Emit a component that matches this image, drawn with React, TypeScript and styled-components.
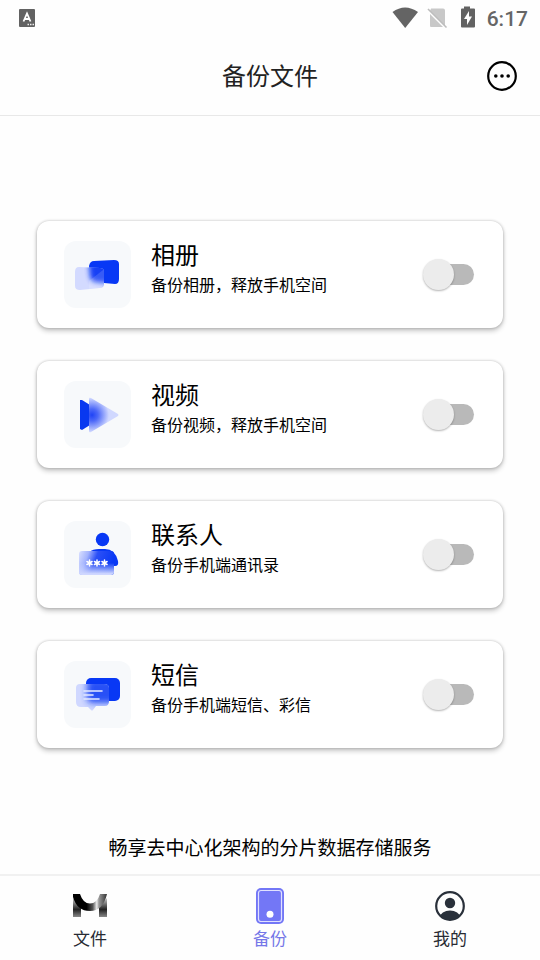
import React, { useState } from "react";
import styled, { createGlobalStyle } from "styled-components";

const GlobalStyle = createGlobalStyle`
  *, *::before, *::after { box-sizing: border-box; }
  body {
    margin: 0;
    background: #fefefe;
    color: #000;
    font-family: "Noto Sans CJK SC", "Noto Sans", sans-serif;
  }
`;

const Screen = styled.div`
  display: flex;
  flex-direction: column;
  min-height: 100vh;
`;

const StatusBar = styled.div`
  display: flex;
  align-items: center;
  justify-content: space-between;
  height: 36px;
  padding: 0 12px 0 19px;
`;

const StatusIcons = styled.div`
  display: flex;
  align-items: center;
`;

const Clock = styled.time`
  margin-left: 10px;
  padding-top: 2px;
  color: #666;
  font: 500 21px/24px Roboto, sans-serif;
`;

const Header = styled.header`
  display: grid;
  grid-template-columns: 1fr auto 1fr;
  align-items: center;
  height: 80px;
  padding: 0 22px;
  border-bottom: 1px solid #e8e8e8;
`;

const PageTitle = styled.h1`
  grid-column: 2;
  margin: 0;
  padding-bottom: 2px;
  color: #222;
  font-size: 24px;
  font-weight: 400;
  line-height: 36px;
`;

const MoreButton = styled.button`
  display: flex;
  justify-self: end;
  padding: 0;
  border: 0;
  background: none;
  cursor: pointer;
`;

const Main = styled.main`
  display: flex;
  flex: 1;
  flex-direction: column;
  padding: 105px 36px 12px;
`;

const CardList = styled.div`
  display: flex;
  flex-direction: column;
  gap: 33px;
`;

const Card = styled.label`
  display: flex;
  align-items: center;
  height: 107px;
  margin: 0 1px;
  padding: 0 29px 0 27px;
  border-radius: 12px;
  background: #fff;
  box-shadow: 0 3px 5px rgba(0, 0, 0, 0.22), 0 0 3px rgba(0, 0, 0, 0.24);
  cursor: pointer;
`;

const Tile = styled.svg`
  flex: none;
  width: 67px;
  height: 67px;
  border-radius: 12px;
  background: #f7f9fb;
`;

const CardText = styled.span`
  display: flex;
  flex: 1;
  flex-direction: column;
  margin-left: 20px;
  padding-bottom: 17px;
`;

const CardTitle = styled.span`
  font-size: 24px;
  line-height: 36px;
`;

const CardNote = styled.span`
  font-size: 16px;
  line-height: 24px;
`;

const Switch = styled.input`
  position: relative;
  display: flex;
  align-items: center;
  flex: none;
  width: 52px;
  height: 31px;
  margin: 0;
  appearance: none;
  border-radius: 16px;
  cursor: pointer;

  &::before {
    content: "";
    width: 48px;
    height: 21px;
    margin-left: 4px;
    border-radius: 11px;
    background: #b9b9b9;
  }

  &::after {
    content: "";
    position: absolute;
    left: 1px;
    width: 31px;
    height: 31px;
    border-radius: 50%;
    background: #ececec;
    box-shadow: 0 1px 2px rgba(0, 0, 0, 0.3);
  }

  &:checked::before { background: #b9bafc; }
  &:checked::after { left: 21px; background: #7577f8; }
`;

const Slogan = styled.p`
  margin: auto 0 0;
  font-size: 19px;
  line-height: 30px;
  text-align: center;
`;

const TabBar = styled.nav`
  display: grid;
  grid-template-columns: repeat(3, 1fr);
  height: 86px;
  border-top: 2px solid #f1f1f1;
`;

const Tab = styled.a<{ $active?: boolean }>`
  display: flex;
  flex-direction: column;
  align-items: center;
  padding-top: 12px;
  color: ${(p) => (p.$active ? "#7577e8" : "#282b33")};
  font-size: 17px;
  line-height: 26px;
  text-decoration: none;

  svg { display: block; margin-bottom: 1px; }
`;

const AlbumIcon = () => (
  <Tile viewBox="0 0 67 67" aria-hidden="true">
    <defs>
      <filter id="album-blur" x="-30%" y="-30%" width="160%" height="160%"><feGaussianBlur stdDeviation="2.5" /></filter>
      <path id="album-back" d="M30 20 L50 19 Q55 19 55 23 V38 Q55 43 51 43 L40 42 L31 41 Q27 40 26 36 L25 25 Q26 20 30 20Z" />
      <path id="album-front" d="M15 26 L36 27 Q40 27 40 31 V43 Q40 47 36 47 L16 49 Q11 49 11 45 V31 Q11 26 15 26Z" />
      <clipPath id="album-clip"><use href="#album-front" /></clipPath>
    </defs>
    <use href="#album-back" fill="#0838f5" />
    <use href="#album-front" fill="#d3daff" />
    <g clipPath="url(#album-clip)"><use href="#album-back" fill="#0838f5" opacity=".95" filter="url(#album-blur)" /></g>
    <path d="M39 29 L40 31 V43 L37 47 L25 48 V40Z" fill="#fff" opacity=".14" />
  </Tile>
);

const VideoIcon = () => (
  <Tile viewBox="0 0 67 67" aria-hidden="true">
    <defs>
      <radialGradient id="video-glow" gradientUnits="userSpaceOnUse" cx="28" cy="34" r="17">
        <stop stopColor="#1f43f6" />
        <stop offset=".35" stopColor="#4c68f8" />
        <stop offset="1" stopColor="#d0d8ff" />
      </radialGradient>
    </defs>
    <path d="M16 19 L18 19 L26 24 V44 L18 49 L16 48Z" fill="#0838f0" />
    <path d="M25 18 Q25 16 27 17 L54 33 Q55 34 54 35 L27 51 Q25 52 25 50Z" fill="url(#video-glow)" />
  </Tile>
);

const star = (x: number) => (
  <path key={x} d={`M${x} 39 v6 M${x - 2.6} 40.5 l5.2 3 M${x + 2.6} 40.5 l-5.2 3`} stroke="#fff" strokeWidth="1.5" strokeLinecap="round" />
);

const ContactsIcon = () => (
  <Tile viewBox="0 0 67 67" aria-hidden="true">
    <defs>
      <linearGradient id="contact-glass" x1="0" y1=".1" x2="1" y2=".35">
        <stop stopColor="#d6ddff" />
        <stop offset=".25" stopColor="#a3b3fd" />
        <stop offset=".5" stopColor="#2c50f6" />
        <stop offset="1" stopColor="#0838f5" />
      </linearGradient>
      <linearGradient id="contact-fade" x1="0" y1="0" x2="0" y2="1">
        <stop offset=".5" stopColor="#cfd7ff" stopOpacity="0" />
        <stop offset=".95" stopColor="#cfd7ff" />
      </linearGradient>
    </defs>
    <circle cx="38.5" cy="18.5" r="6.7" fill="#0838f5" />
    <path d="M25 31 Q29 28 35 28 H41 Q51 28 54 40 Q55 45 51 45 H30Z" fill="#0838f5" />
    <rect x="15" y="30" width="35" height="24" rx="3" fill="url(#contact-glass)" />
    <rect x="15" y="30" width="35" height="24" rx="3" fill="url(#contact-fade)" />
    {[25.5, 33, 40.5].map(star)}
  </Tile>
);

const MessageIcon = () => (
  <Tile viewBox="0 0 67 67" aria-hidden="true">
    <defs>
      <filter id="sms-blur" x="-30%" y="-30%" width="160%" height="160%"><feGaussianBlur stdDeviation="3" /></filter>
      <path id="sms-front" d="M16 23 H40 Q45 23 45 27 V40 Q45 45 41 45 H32 L29 49 Q28 50 27 49 L24 46 H17 Q12 46 12 41 V27 Q12 23 16 23Z" />
      <clipPath id="sms-clip"><use href="#sms-front" /></clipPath>
    </defs>
    <rect x="22" y="17" width="34" height="23" rx="5" fill="#0838f5" />
    <use href="#sms-front" fill="#d0d8ff" />
    <g clipPath="url(#sms-clip)">
      <rect x="23" y="18" width="33" height="24" rx="5" fill="#1643f5" opacity=".9" filter="url(#sms-blur)" />
    </g>
    <path d="M20 30 H38 M20 34 H29 M20 38 H35" stroke="#e4e9ff" strokeWidth="1.6" strokeLinecap="round" />
  </Tile>
);

const items = [
  { id: "album", title: "相册", note: "备份相册，释放手机空间", Icon: AlbumIcon },
  { id: "video", title: "视频", note: "备份视频，释放手机空间", Icon: VideoIcon },
  { id: "contacts", title: "联系人", note: "备份手机端通讯录", Icon: ContactsIcon },
  { id: "sms", title: "短信", note: "备份手机端短信、彩信", Icon: MessageIcon },
];

const FilesIcon = () => (
  <svg width="36" height="36" viewBox="0 0 36 36" aria-hidden="true">
    <defs>
      <linearGradient id="files-arc">
        <stop offset=".4" stopColor="#000" />
        <stop offset=".58" stopColor="#555" />
        <stop offset=".66" stopColor="#bbb" />
        <stop offset=".7" stopColor="#eee" />
        <stop offset=".76" stopColor="#999" />
        <stop offset="1" stopColor="#333" />
      </linearGradient>
      <linearGradient id="files-leg" x1="0" y1="0" x2="0" y2="1">
        <stop stopColor="#ccc" />
        <stop offset=".6" stopColor="#222" />
        <stop offset="1" stopColor="#888" />
      </linearGradient>
    </defs>
    <path d="M1 10 L9 18 V29 H1Z M35 10 L27 18 V29 H35Z" fill="url(#files-leg)" />
    <path d="M1 6 H8 Q11 15.500 18 15.500 Q25 15.500 28 6 H35 Q31 23 18 23 Q5 23 1 9Z" fill="url(#files-arc)" />
  </svg>
);

const BackupIcon = () => (
  <svg width="36" height="36" viewBox="0 0 36 36" aria-hidden="true">
    <rect x="4" y="0" width="28" height="36" rx="5" fill="#7377f6" />
    <rect x="6.5" y="2.5" width="23" height="31" rx="2.5" fill="none" stroke="#e0e1ff" strokeWidth="1.2" />
    <circle cx="18" cy="26.2" r="3.5" fill="#fff" />
  </svg>
);

const ProfileIcon = () => (
  <svg width="36" height="36" viewBox="0 0 36 36" aria-hidden="true">
    <defs><clipPath id="profile-clip"><circle cx="18" cy="18" r="14" /></clipPath></defs>
    <circle cx="18" cy="18" r="13.8" fill="none" stroke="#29303a" strokeWidth="2.2" />
    <circle cx="18" cy="15" r="5.2" fill="#29303a" />
    <ellipse cx="18" cy="29" rx="10" ry="6.5" fill="#29303a" clipPath="url(#profile-clip)" />
  </svg>
);

export default function App() {
  const [enabled, setEnabled] = useState<Record<string, boolean>>({});

  return (
    <>
      <GlobalStyle />
      <Screen>
        <StatusBar>
          <svg width="18" height="20" viewBox="0 0 18 20" aria-hidden="true">
            <rect y="1" width="16" height="18" rx="1" fill="#626262" />
            <path d="M4.5 13.5 L8 5.5 L11.5 13.5 M6 11 H10" fill="none" stroke="#fff" strokeWidth="1.8" />
            <path d="M8.5 16.5 h1.5 M11 16.5 h1.5 M13.5 16.5 h1.5" stroke="#eee" strokeWidth="1.5" />
          </svg>
          <StatusIcons>
            <svg width="85" height="24" viewBox="0 0 85 24" aria-hidden="true">
              <path d="M0.5 6 Q13 -3 26 6 L13.2 22Z" fill="#646464" />
              <path d="M39 2.5 H51 Q53 2.5 53 4.5 V20 L38 5Z M38 8 L51 21 H39 Q38 21 38 19.5Z" fill="#c8c8c8" />
              <path d="M36 3 L54.5 21.5" stroke="#bdbdbd" strokeWidth="1.6" />
              <path d="M72 0.5 h6 v2 h4 q1 0 1 1 v17 q0 1 -1 1 h-12 q-1 0 -1 -1 v-17 q0 -1 1 -1 h2z" fill="#626262" />
              <path d="M77 5 L72 13 H75 V19 L80 10.5 H77Z" fill="#fff" />
            </svg>
            <Clock>6:17</Clock>
          </StatusIcons>
        </StatusBar>
        <Header>
          <PageTitle>备份文件</PageTitle>
          <MoreButton type="button" aria-label="更多">
            <svg width="32" height="32" viewBox="0 0 32 32" aria-hidden="true">
              <circle cx="16" cy="16" r="13.8" fill="none" stroke="#000" strokeWidth="2.2" />
              <circle cx="9.8" cy="16" r="1.8" />
              <circle cx="16" cy="16" r="1.8" />
              <circle cx="22.2" cy="16" r="1.8" />
            </svg>
          </MoreButton>
        </Header>
        <Main>
          <CardList>
            {items.map(({ id, title, note, Icon }) => (
              <Card key={id}>
                <Icon />
                <CardText>
                  <CardTitle>{title}</CardTitle>
                  <CardNote>{note}</CardNote>
                </CardText>
                <Switch
                  type="checkbox"
                  role="switch"
                  checked={!!enabled[id]}
                  onChange={(e) => setEnabled({ ...enabled, [id]: e.target.checked })}
                />
              </Card>
            ))}
          </CardList>
          <Slogan>畅享去中心化架构的分片数据存储服务</Slogan>
        </Main>
        <TabBar>
          <Tab href="#files"><FilesIcon />文件</Tab>
          <Tab href="#backup" $active aria-current="page"><BackupIcon />备份</Tab>
          <Tab href="#profile"><ProfileIcon />我的</Tab>
        </TabBar>
      </Screen>
    </>
  );
}
